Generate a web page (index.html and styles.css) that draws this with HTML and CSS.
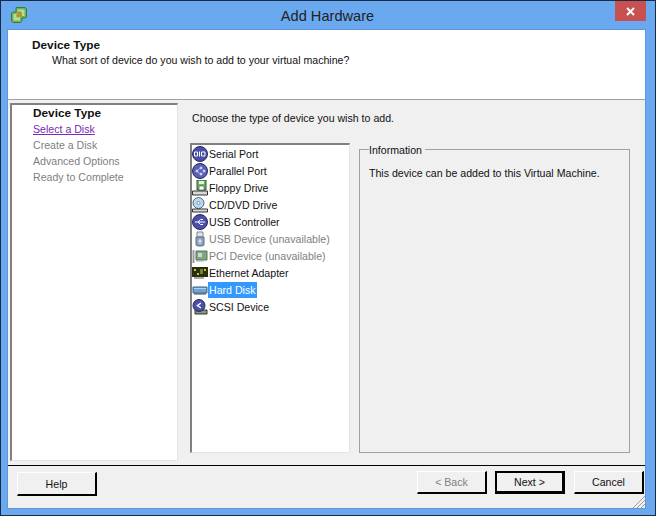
FILE: index.html
```html
<!DOCTYPE html>
<html lang="en">
<head>
    <meta charset="UTF-8">
    <title>Add Hardware</title>
    <link rel="stylesheet" href="styles.css">
</head>
<body>
    <div class="window">
        <div class="titlebar">
            <svg class="app-icon" width="16" height="16" viewBox="0 0 16 16">
                <path d="M5 .500h9l1.500 1.500v8L14 11h-3v3l-1.500 1.500H2L.500 14V6L2 5h3z" fill="#6cb45a" stroke="#3b7a3c"/>
                <path d="M6.500 2.500h6.500l.500.500v6h-2.500V6.500L9.500 4.500h-3z" fill="#b4dc9c"/>
                <path d="M2.500 7h5v1.500L9 10v3.500H3L2.500 13z" fill="#b4dc9c"/>
                <path d="M6 10l4-5" stroke="#c98a20" stroke-width="3"/>
            </svg>
            <div class="title">Add Hardware</div>
            <div class="close">
                <svg width="9" height="9" viewBox="0 0 9 9"><path d="M1 1l7 7M8 1L1 8" stroke="#fff" stroke-width="2"/></svg>
            </div>
        </div>
        <div class="client">
            <div class="header">
                <div class="header-title">Device Type</div>
                <div class="header-sub">What sort of device do you wish to add to your virtual machine?</div>
            </div>
            <div class="main">
                <div class="steps">
                    <div class="step current">Device Type</div>
                    <a class="step link" href="#">Select a Disk</a>
                    <div class="step">Create a Disk</div>
                    <div class="step">Advanced Options</div>
                    <div class="step">Ready to Complete</div>
                </div>
                <div class="content">
                    <div class="prompt">Choose the type of device you wish to add.</div>
                    <div class="panes">
                        <ul class="device-list">
                            <li>
                                <svg class="icon" viewBox="0 0 16 16"><circle cx="8" cy="8" r="7.500" fill="#4a4fa8" stroke="#25285f"/><path d="M2.500 6h3v4h-3zM9.500 6h3.500v4H9.500z" fill="none" stroke="#fff"/><path d="M7.500 5.500v5" stroke="#fff"/></svg>
                                <span>Serial Port</span>
                            </li>
                            <li>
                                <svg class="icon" viewBox="0 0 16 16"><circle cx="8" cy="8" r="7.500" fill="#5a5fb8" stroke="#25285f"/><path d="M4 7h2v2H4zM8 4h2v2H8zM8 10h2v2H8zM11 7h2v2h-2zM6 7l2-2M6 9l2 2" fill="#cfd2f2" stroke="#cfd2f2" stroke-width=".6"/></svg>
                                <span>Parallel Port</span>
                            </li>
                            <li>
                                <svg class="icon" viewBox="0 0 16 16"><path d="M5 0h9v10H5z" fill="#6fb06a" stroke="#2c5e30"/><path d="M7 1h5v3H7z" fill="#e6f2e0"/><path d="M7 6h5v4H7z" fill="#fff" stroke="#2c5e30" stroke-width=".6"/><path d="M.500 11h15v4H.500z" fill="#d8d8d8" stroke="#333"/></svg>
                                <span>Floppy Drive</span>
                            </li>
                            <li>
                                <svg class="icon" viewBox="0 0 16 16"><circle cx="6.500" cy="6" r="5.500" fill="#bcd6ea" stroke="#4a6a80"/><circle cx="6.500" cy="6" r="1.500" fill="#fff" stroke="#4a6a80" stroke-width=".6"/><path d="M.500 12h15v3H.500z" fill="#d8d8d8" stroke="#333"/></svg>
                                <span>CD/DVD Drive</span>
                            </li>
                            <li>
                                <svg class="icon" viewBox="0 0 16 16"><circle cx="8" cy="8" r="7.500" fill="#4a4fa8" stroke="#25285f"/><path d="M3 8h10M6 8l2.500-2.500H11M6 8l2.500 2.500H11" fill="none" stroke="#fff"/></svg>
                                <span>USB Controller</span>
                            </li>
                            <li class="off">
                                <svg class="icon" viewBox="0 0 16 16"><path d="M5 1h6v5H5z" fill="#dfe4ea" stroke="#7d8794"/><path d="M4 6h8v8l-2 1H6l-2-1z" fill="#8ea2bb" stroke="#5c6f88"/><path d="M8 8v5M6 10h4" stroke="#e8eef5"/></svg>
                                <span>USB Device (unavailable)</span>
                            </li>
                            <li class="off">
                                <svg class="icon" viewBox="0 0 16 16"><path d="M1.500 2v13" stroke="#9a9a9a" stroke-width="2"/><path d="M4 3h11v9H4z" fill="#7fa583" stroke="#55745a"/><path d="M6 5h4v4H6z" fill="#c8dcc8"/><path d="M4 13h8" stroke="#a8a8a8"/></svg>
                                <span>PCI Device (unavailable)</span>
                            </li>
                            <li>
                                <svg class="icon" viewBox="0 0 16 16"><path d="M0 2h16v10H0z" fill="#2c2c10"/><path d="M2 4h2v2H2zM5 8h2v2H5z" fill="#b8d020"/><path d="M8 4h3v5H8z" fill="#6a8a20"/><path d="M12 4h2v2h-2z" fill="#e0c020"/><path d="M2 13h10" stroke="#555"/></svg>
                                <span>Ethernet Adapter</span>
                            </li>
                            <li class="selected">
                                <svg class="icon" viewBox="0 0 16 16"><path d="M1 5h14v6H1z" fill="#6fa4d4" stroke="#3c6288"/><path d="M2 6h12v1H2z" fill="#b4d4f0"/><path d="M2 12h12" stroke="#2a4460"/></svg>
                                <span>Hard Disk</span>
                            </li>
                            <li>
                                <svg class="icon" viewBox="0 0 16 16"><path d="M3 11h12v4H3z" fill="#8a9a80" stroke="#333"/><circle cx="7" cy="6.500" r="6" fill="#4a4fa8" stroke="#25285f"/><path d="M9 4L5.500 6.500 9 9" fill="none" stroke="#fff" stroke-width="1.500"/></svg>
                                <span>SCSI Device</span>
                            </li>
                        </ul>
                        <fieldset class="info">
                            <legend>Information</legend>
                            <p>This device can be added to this Virtual Machine.</p>
                        </fieldset>
                    </div>
                </div>
            </div>
            <div class="footer">
                <button class="help">Help</button>
                <div class="nav">
                    <button class="disabled">&lt; Back</button>
                    <button class="default">Next &gt;</button>
                    <button>Cancel</button>
                </div>
            </div>
            <svg class="grip" width="13" height="13" viewBox="0 0 13 13"><path d="M13 1L1 13M13 5L5 13M13 9L9 13" stroke="#9a9a9a"/></svg>
        </div>
    </div>
</body>
</html>
```

FILE: styles.css
```css
body {
    margin: 0;
    font-family: 'Liberation Sans', Arial, sans-serif;
    font-size: 10.6px;
    color: #111;
}

.window {
    width: 656px;
    height: 516px;
    box-sizing: border-box;
    display: flex;
    flex-direction: column;
    padding: 0 10px 7px 7px;
    background-color: #6aa9f0;
    border: 1px solid #1a2a44;
}

.titlebar {
    height: 29px;
    flex: none;
    display: flex;
    position: relative;
    justify-content: center;
}

.app-icon {
    position: absolute;
    left: 3px;
    top: 6px;
}

.title {
    font-size: 14.6px;
    line-height: 30px;
    color: #222;
    margin-left: 2px;
}

.close {
    position: absolute;
    right: -1px;
    top: 0;
    width: 31px;
    height: 20px;
    background-color: #c75050;
    display: flex;
    align-items: center;
    justify-content: center;
}

.client {
    flex: 1;
    position: relative;
    background-color: #f0f0f0;
    box-shadow: 0 0 0 1px #5f96d8;
    display: flex;
    flex-direction: column;
    min-height: 0;
}

.header {
    height: 61px;
    flex: none;
    background-color: #fff;
    border-bottom: 1px solid #a0a0a0;
    padding: 8px 0 0 24px;
}

.header-title {
    font-size: 11.8px;
    font-weight: 700;
    line-height: 15px;
}

.header-sub {
    margin-left: 20px;
    line-height: 15px;
}

.main {
    flex: 1;
    display: flex;
    min-height: 0;
    padding: 3px 0 4px 2px;
    border-bottom: 1px solid #000;
}

.steps {
    width: 168px;
    flex: none;
    box-sizing: border-box;
    background-color: #fff;
    border: 1px solid #e4e4e4;
    border-top: 2px solid #808080;
    border-left: 2px solid #808080;
    padding: 0 0 0 21px;
    display: flex;
    flex-direction: column;
}

.step {
    height: 16px;
    line-height: 16px;
    color: #808080;
}

.step.current {
    font-size: 11.8px;
    font-weight: 700;
    color: #111;
}

.step.link {
    color: #7a28b8;
}

.content {
    flex: 1;
    display: flex;
    flex-direction: column;
    padding: 7px 15px 8px 12px;
    min-width: 0;
}

.prompt {
    line-height: 16px;
    margin-left: 2px;
}

.panes {
    flex: 1;
    display: flex;
    gap: 9px;
    min-height: 0;
    margin-top: 17px;
}

.device-list {
    list-style: none;
    margin: 0;
    padding: 0;
    width: 160px;
    box-sizing: border-box;
    background-color: #fff;
    border: 1px solid #e4e4e4;
    border-top: 2px solid #808080;
    border-left: 2px solid #808080;
}

.device-list li {
    height: 17px;
    display: flex;
    align-items: center;
}

.device-list li span {
    padding: 0 1px;
    line-height: 16px;
}

.device-list li.off {
    color: #808080;
}

.device-list li.selected span {
    background-color: #3399ff;
    color: #fff;
}

.icon {
    width: 16px;
    height: 16px;
    flex: none;
}

.info {
    flex: 1;
    margin: -2px 0 0;
    padding: 0 9px;
    border: 1px solid #a0a0a0;
    min-width: 0;
}

.info legend {
    padding: 2px 3px 0 0;
    line-height: 14px;
}

.info p {
    margin: 8px 0 0;
    line-height: 16px;
}

.footer {
    height: 42px;
    flex: none;
    display: flex;
    justify-content: space-between;
    padding: 5px 0 0 9px;
    box-sizing: border-box;
}

.nav {
    display: flex;
    gap: 8px;
    padding-right: 1px;
}

button {
    font: inherit;
    color: #111;
    width: 70px;
    height: 23px;
    padding: 0;
    background-color: #f0f0f0;
    border: 1px solid;
    border-color: #fff #000 #000 #fff;
    border-width: 1px 2px 2px 1px;
}

button.help {
    width: 80px;
    height: 24px;
    margin-top: 1px;
}

button.default {
    border: 2px solid #000;
    border-width: 2px 3px 3px 2px;
    margin-right: 1px;
}

button.disabled {
    color: #808080;
}

.grip {
    position: absolute;
    right: 0;
    bottom: 0;
}
```
